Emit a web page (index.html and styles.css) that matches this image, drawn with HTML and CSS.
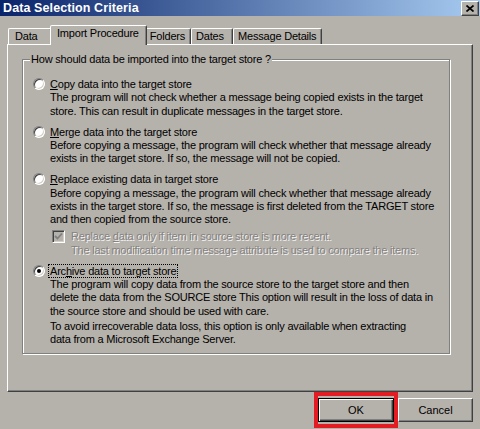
FILE: index.html
```html
<!DOCTYPE html>
<html>
<head>
	<meta charset="utf-8">
	<title>Data Selection Criteria</title>
	<link rel="stylesheet" href="styles.css">
</head>
<body>
	<div class="window">
		<div class="titlebar">
			<span class="title">Data Selection Criteria</span>
			<span class="close">
				<svg width="8" height="7" viewBox="0 0 8 7"><path d="M0.5 0.5L7.5 6.5M7.5 0.5L0.5 6.5" stroke="#000" stroke-width="1.7"/></svg>
			</span>
		</div>
		<div class="content">
			<div class="tabs">
				<div class="tab tab-first">Data</div>
				<div class="tab active">Import Procedure</div>
				<div class="tab">Folders</div>
				<div class="tab">Dates</div>
				<div class="tab">Message Details</div>
			</div>
			<div class="panel">
				<fieldset class="group">
					<legend>How should data be imported into the target store ?</legend>
					<div class="choices">
						<div class="option">
							<div class="choice"><span class="radio"></span><span><u>C</u>opy data into the target store</span></div>
							<p class="desc">The program will not check whether a message being copied exists in the target<br>store. This can result in duplicate messages in the target store.</p>
						</div>
						<div class="option">
							<div class="choice"><span class="radio"></span><span><u>M</u>erge data into the target store</span></div>
							<p class="desc">Before copying a message, the program will check whether that message already<br>exists in the target store. If so, the message will not be copied.</p>
						</div>
						<div class="option">
							<div class="choice"><span class="radio"></span><span><u>R</u>eplace existing data in target store</span></div>
							<p class="desc">Before copying a message, the program will check whether that message already<br>exists in the target store. If so, the message is first deleted from the TARGET store<br>and then copied from the source store.</p>
							<div class="sub disabled">
								<span class="check">
									<svg width="9" height="9" viewBox="0 0 9 9"><path d="M1 4L3.5 6.5L8 1.5" fill="none" stroke="#808080" stroke-width="1.8"/></svg>
								</span>
								<p>Replace <u>d</u>ata only if item in source store is more recent.<br>The last modification time message attribute is used to compare the items.</p>
							</div>
						</div>
						<div class="option last">
							<div class="choice"><span class="radio checked"></span><span class="focus">Arc<u>h</u>ive data to target store</span></div>
							<p class="desc">The program will copy data from the source store to the target store and then<br>delete the data from the SOURCE store This option will result in the loss of data in<br>the source store and should be used with care.</p>
							<p class="desc note">To avoid irrecoverable data loss, this option is only available when extracting<br>data from a Microsoft Exchange Server.</p>
						</div>
					</div>
				</fieldset>
			</div>
			<div class="buttons">
				<span class="highlight"><button class="btn default">OK</button></span>
				<button class="btn">Cancel</button>
			</div>
		</div>
	</div>
</body>
</html>
```
FILE: styles.css
```css
body {
	margin: 0;
	background-color: #b5b1ab;
	font-family: "Liberation Sans", Arial, sans-serif;
	font-size: 11px;
	letter-spacing: -0.2px;
	color: #000;
}
.window {
	width: 480px;
	height: 429px;
	overflow: hidden;
}
.titlebar {
	height: 16px;
	display: flex;
	align-items: center;
	justify-content: space-between;
	padding-left: 3px;
	background: linear-gradient(to right, #0a246a, #a6caf0);
}
.title {
	color: #fff;
	font-weight: bold;
	font-size: 12.5px;
	letter-spacing: 0.1px;
}
.close {
	box-sizing: border-box;
	width: 18px;
	height: 15px;
	margin-right: 1px;
	display: flex;
	align-items: center;
	justify-content: center;
	background-color: #b5b1ab;
	border: 1px solid;
	border-color: #fff #404040 #404040 #fff;
	box-shadow: inset -1px -1px #808080;
}
.content {
	padding: 9px 7px 0 7px;
}
.tabs {
	display: flex;
	align-items: flex-end;
	height: 19px;
	margin-left: 1px;
}
.tab {
	box-sizing: border-box;
	height: 16px;
	min-width: 42px;
	padding: 1px 5px 0 4px;
	line-height: 13.4px;
	white-space: nowrap;
	border: 1px solid;
	border-bottom: none;
	border-color: #fff #404040 transparent #fff;
	border-radius: 2px 2px 0 0;
	box-shadow: inset -1px 0 #808080;
}
.tab-first {
	min-width: 44px;
	padding-left: 6px;
}
.tab.active {
	height: 20px;
	margin: 0 -2px -1px;
	padding: 1px 7px 0 6px;
	position: relative;
	z-index: 1;
	background-color: #b5b1ab;
}
.panel {
	box-sizing: border-box;
	height: 348px;
	padding: 8px 22px 0 14px;
	border: 1px solid;
	border-color: #fff #404040 #404040 #fff;
	box-shadow: inset -1px -1px #808080;
}
.group {
	margin: 0;
	padding: 10.4px 0 6px 0;
	border: 1px solid #808080;
	box-shadow: inset 1px 1px #fff, 1px 1px #fff;
}
.group legend {
	margin-left: 7px;
	padding: 0 1px;
	line-height: 13.4px;
	background-color: #b5b1ab;
}
.choices {
	padding-left: 10px;
}
.option {
	margin-bottom: 6.5px;
}
.option.last {
	margin-bottom: 0;
}
.choice {
	display: flex;
	align-items: center;
	height: 14.4px;
	white-space: nowrap;
}
.radio {
	box-sizing: border-box;
	width: 12px;
	height: 12px;
	margin-right: 5px;
	border-radius: 50%;
	background-color: #fff;
	border: 1px solid;
	border-color: #808080 #fff #fff #808080;
	box-shadow: inset 1px 1px #404040, inset -1px -1px #d4d0c8;
	display: flex;
	align-items: center;
	justify-content: center;
}
.radio.checked::after {
	content: "";
	width: 4px;
	height: 4px;
	border-radius: 50%;
	background-color: #000;
}
.focus {
	margin-left: -2px;
	padding: 0 1px;
	border: 1px dotted #000;
}
.desc {
	margin: 0;
	padding-left: 17px;
	line-height: 13.4px;
	white-space: nowrap;
}
.desc.note {
	margin-top: 1.5px;
}
.sub {
	display: flex;
	align-items: flex-start;
	margin-top: 3.5px;
	padding-left: 19px;
}
.sub p {
	margin: 0;
	line-height: 13.4px;
	white-space: nowrap;
}
.disabled {
	color: #858280;
	text-shadow: 1px 1px 0 #f4f4f4;
}
.check {
	box-sizing: border-box;
	width: 13px;
	height: 13px;
	margin-right: 6px;
	flex-shrink: 0;
	display: flex;
	align-items: center;
	justify-content: center;
	background-color: #b5b1ab;
	border: 1px solid;
	border-color: #808080 #fff #fff #808080;
	box-shadow: inset 1px 1px #404040, inset -1px -1px #d4d0c8;
}
.buttons {
	display: flex;
	justify-content: flex-end;
	align-items: center;
}
.highlight {
	display: flex;
	padding: 2px 0;
	border: 4px solid #e31b23;
}
.btn {
	box-sizing: border-box;
	width: 75px;
	height: 24px;
	padding: 0;
	font: inherit;
	color: #000;
	background-color: #b5b1ab;
	border: 1px solid;
	border-color: #fff #404040 #404040 #fff;
	box-shadow: inset -1px -1px #808080;
}
.btn.default {
	width: 76px;
	border: 1px solid #000;
	box-shadow: inset 1px 1px #fff, inset -1px -1px #404040, inset -2px -2px #808080;
}
```
